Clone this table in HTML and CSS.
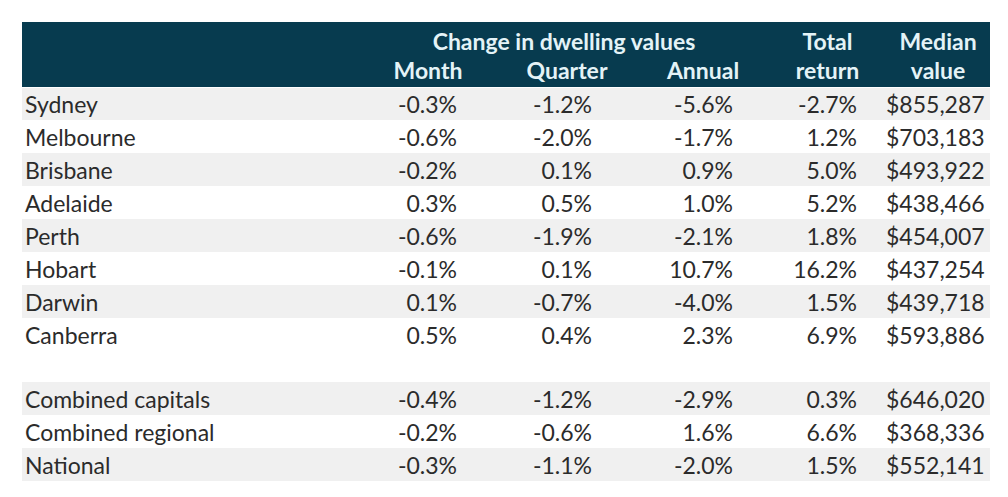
FILE: index.html
```html
<!DOCTYPE html>
<html>
<head>
<meta charset="utf-8">
<link rel="stylesheet" href="styles.css">
</head>
<body>
<table class="values">
  <colgroup>
    <col class="c-label"><col class="c-month"><col class="c-quarter"><col class="c-annual"><col class="c-total"><col class="c-median">
  </colgroup>
  <thead>
    <tr class="h1">
      <th></th>
      <th colspan="3">Change in dwelling values</th>
      <th>Total</th>
      <th>Median</th>
    </tr>
    <tr class="h2">
      <th></th>
      <th>Month</th>
      <th>Quarter</th>
      <th>Annual</th>
      <th>return</th>
      <th>value</th>
    </tr>
  </thead>
  <tbody>
    <tr class="alt"><td>Sydney</td><td>-0.3%</td><td>-1.2%</td><td>-5.6%</td><td>-2.7%</td><td>$855,287</td></tr>
    <tr><td>Melbourne</td><td>-0.6%</td><td>-2.0%</td><td>-1.7%</td><td>1.2%</td><td>$703,183</td></tr>
    <tr class="alt"><td>Brisbane</td><td>-0.2%</td><td>0.1%</td><td>0.9%</td><td>5.0%</td><td>$493,922</td></tr>
    <tr><td>Adelaide</td><td>0.3%</td><td>0.5%</td><td>1.0%</td><td>5.2%</td><td>$438,466</td></tr>
    <tr class="alt"><td>Perth</td><td>-0.6%</td><td>-1.9%</td><td>-2.1%</td><td>1.8%</td><td>$454,007</td></tr>
    <tr><td>Hobart</td><td>-0.1%</td><td>0.1%</td><td>10.7%</td><td>16.2%</td><td>$437,254</td></tr>
    <tr class="alt"><td>Darwin</td><td>0.1%</td><td>-0.7%</td><td>-4.0%</td><td>1.5%</td><td>$439,718</td></tr>
    <tr><td>Canberra</td><td>0.5%</td><td>0.4%</td><td>2.3%</td><td>6.9%</td><td>$593,886</td></tr>
    <tr class="gap"><td colspan="6"></td></tr>
    <tr class="alt"><td>Combined capitals</td><td>-0.4%</td><td>-1.2%</td><td>-2.9%</td><td>0.3%</td><td>$646,020</td></tr>
    <tr><td>Combined regional</td><td>-0.2%</td><td>-0.6%</td><td>1.6%</td><td>6.6%</td><td>$368,336</td></tr>
    <tr class="alt"><td>National</td><td>-0.3%</td><td>-1.1%</td><td>-2.0%</td><td>1.5%</td><td>$552,141</td></tr>
  </tbody>
</table>
</body>
</html>
```
FILE: styles.css
```css
html, body {
  margin: 0;
  background: #ffffff;
}
body {
  padding: 22px 0 0 22px;
  font-family: "Lato", "Open Sans", "Liberation Sans", sans-serif;
}
.values {
  border-collapse: collapse;
  table-layout: fixed;
  width: 968px;
}
.c-label { width: 337px; }
.c-month { width: 138px; }
.c-quarter { width: 140px; }
.c-annual { width: 132px; }
.c-total { width: 117px; }
.c-median { width: 104px; }

.values thead th {
  background: #073b4f;
  color: #e4f3f7;
  font-weight: 700;
  font-size: 23px;
  line-height: 24px;
  text-align: center;
  white-space: nowrap;
  box-sizing: border-box;
}
.values .h1 th { height: 33px; vertical-align: middle; padding: 4px 0 0; }
.values .h2 th { height: 32px; vertical-align: middle; padding: 0 0 2px; }

.values tbody td {
  height: 33px;
  box-sizing: border-box;
  padding: 0;
  font-size: 23px;
  line-height: 24px;
  color: #2b2b2b;
  text-align: right;
  white-space: nowrap;
  vertical-align: middle;
}
.values tbody tr:first-child td { border-top: 1px solid #ffffff; }
.values tbody td:nth-child(1) { text-align: left; padding-left: 3px; }
.values tbody td:nth-child(2) { padding-right: 40px; }
.values tbody td:nth-child(3) { padding-right: 45px; }
.values tbody td:nth-child(4) { padding-right: 36px; }
.values tbody td:nth-child(5) { padding-right: 29px; }
.values tbody td:nth-child(6) { padding-right: 8px; }
.values tbody tr.alt td { background: #f0f0f0; }
.values tbody tr.gap td { height: 31px; background: #ffffff; }
```
